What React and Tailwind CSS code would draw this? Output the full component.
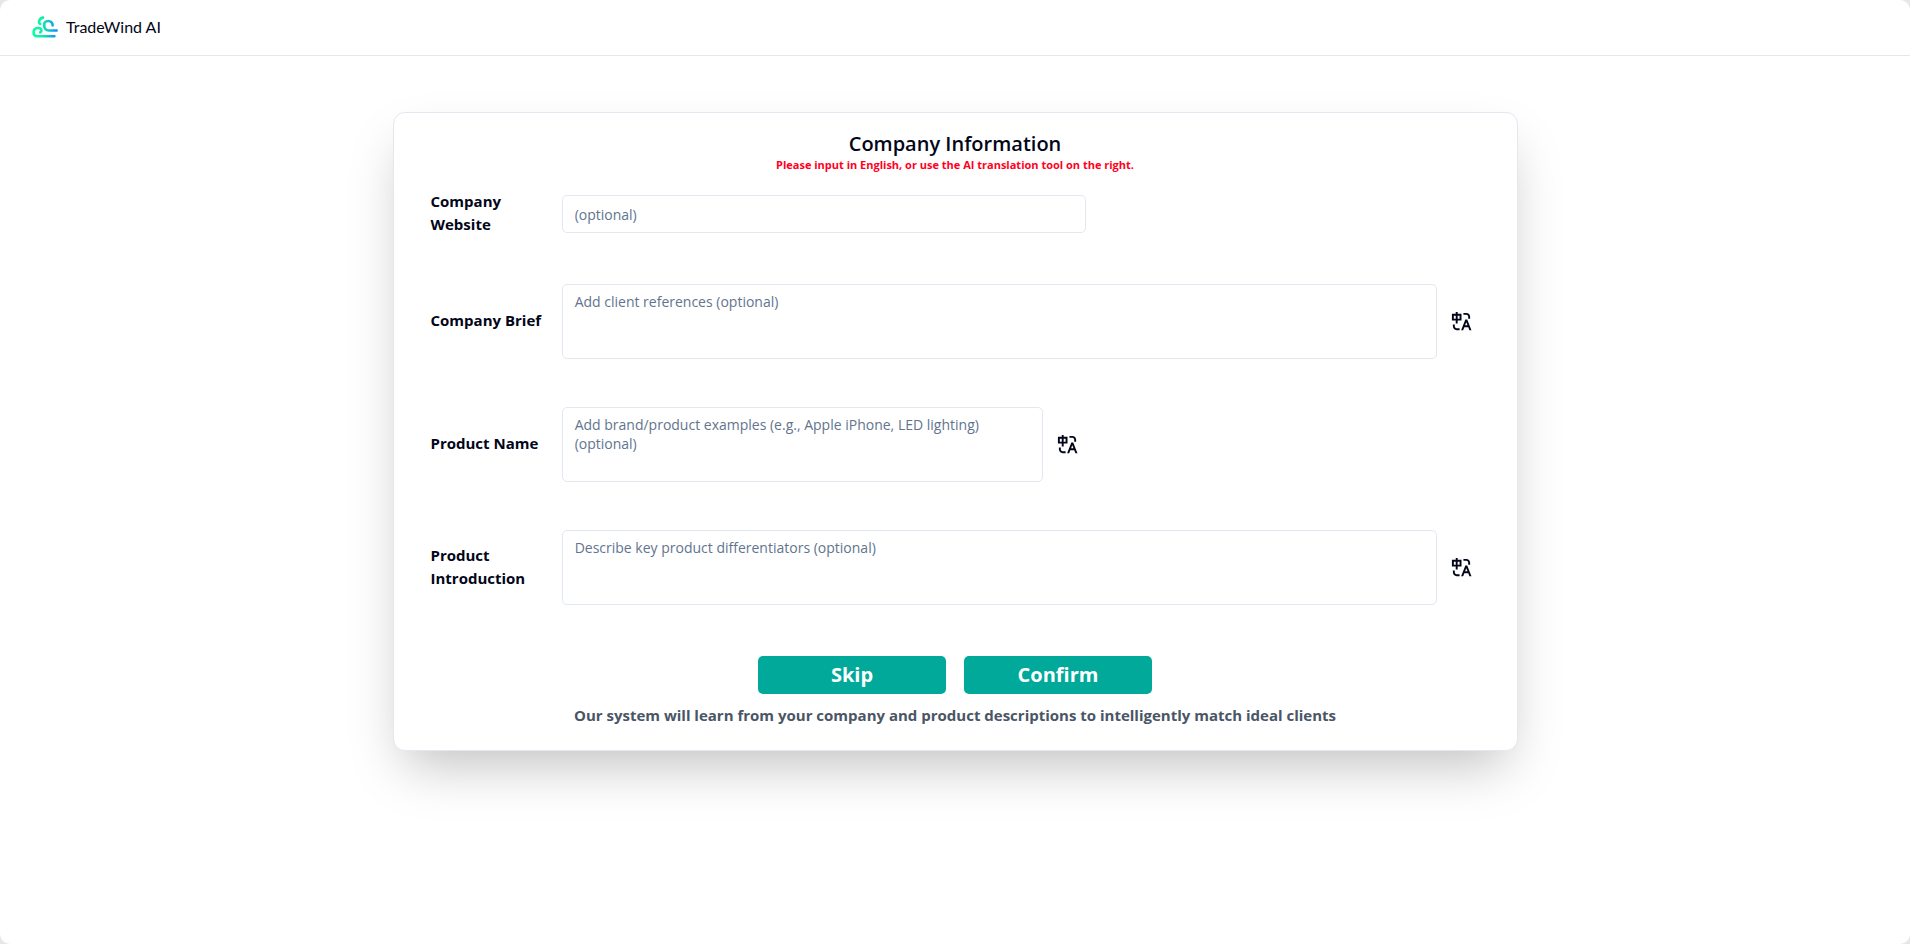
function Logo() {
  return (
    <svg viewBox="0 0 26 22" className="h-[22px] w-[26px]" fill="none" strokeWidth="2.6" strokeLinecap="round" aria-hidden="true">
      <defs>
        <linearGradient id="wind" x1="0" y1="0" x2="26" y2="0" gradientUnits="userSpaceOnUse">
          <stop offset="0" stopColor="#0cffa0" />
          <stop offset="0.35" stopColor="#0ff0a8" />
          <stop offset="0.65" stopColor="#12c4d0" />
          <stop offset="1" stopColor="#1482ff" />
        </linearGradient>
      </defs>
      <g stroke="url(#wind)">
        <path d="M8.2 8C7 7.2 6.8 6.2 7.2 4.8C7.8 3 9.2 1.9 11 1.6" />
        <path d="M12.2 9.2C11.8 6.8 13.6 5 16.2 5C18.8 5 20.8 6.8 20.6 9.4" />
        <path d="M12.2 9.2C12 12.6 14 14.5 16.8 14.5H24.6" />
        <path d="M8.2 16.4C9.2 15.8 9.6 15.2 9.4 14.2C9 12.6 7.6 11.8 5.8 12C3 12.2 1.6 14 1.6 16.4C1.6 18.8 2.8 20.2 5.2 20.2H22.4" />
      </g>
    </svg>
  );
}

function TranslateIcon() {
  return (
    <svg viewBox="0 0 24 24" className="size-[23px]" fill="currentColor" aria-hidden="true">
      <path d="M5 15V17C5 18.0544 5.81588 18.9182 6.85074 18.9945L7 19H10V21H7C4.79086 21 3 19.2091 3 17V15H5ZM18 10L22.4 21H20.245L19.044 18H14.954L13.755 21H11.601L16 10H18ZM17 12.8852L15.753 16H18.245L17 12.8852ZM8 2V4H12V11H8V14H6V11H2V4H6V2H8ZM17 3C19.2091 3 21 4.79086 21 7V9H19V7C19 5.89543 18.1046 5 17 5H14V3H17ZM6 6H4V9H6V6ZM10 6H8V9H10V6Z" />
    </svg>
  );
}

function TranslateButton({ label }) {
  return (
    <button type="button" aria-label={label} className="flex w-[43px] shrink-0 items-center justify-center pl-1.5">
      <TranslateIcon />
    </button>
  );
}

function Field({ id, label, children }) {
  return (
    <div className="grid grid-cols-8 items-center">
      <label htmlFor={id} className="pr-4 pb-0.5 font-bold leading-[23px]">
        {label}
      </label>
      {children}
    </div>
  );
}

const box =
  "min-w-0 flex-1 rounded-[5px] border border-slate-200 bg-white px-3 text-[14px] text-slate-900 placeholder:text-slate-500";

function AreaField({ id, label, placeholder, half }) {
  return (
    <Field id={id} label={label}>
      <div className={half ? "col-span-4 flex items-center" : "col-span-7 flex items-center"}>
        <textarea id={id} placeholder={placeholder} className={box + " block h-[75px] resize-none py-[7px] leading-[19px]"} />
        <TranslateButton label={"Translate " + label} />
      </div>
    </Field>
  );
}

export default function App() {
  return (
    <div className="min-h-screen bg-gray-200">
      <div className="flex min-h-screen flex-col rounded-[10px] bg-white font-['Open_Sans','Noto_Sans',sans-serif] text-[15px] leading-[22px] text-slate-950">
        <header className="flex h-14 items-center gap-2 border-b border-slate-200 px-8 pb-0.5">
          <Logo />
          <span className="font-['Lato',sans-serif] text-[16px]">TradeWind AI</span>
        </header>
        <main className="flex justify-center px-4 pt-14 pb-16">
          <form
            className="w-full max-w-[1125px] rounded-xl border border-slate-200 bg-white px-[37px] pt-5 pb-6 shadow-2xl"
            onSubmit={(e) => e.preventDefault()}
          >
            <h1 className="text-center text-[20px] font-semibold leading-[22px]">Company Information</h1>
            <p className="text-center text-[11px] font-bold leading-[20px] text-[#ff0022]">
              Please input in English, or use the AI translation tool on the right.
            </p>
            <div className="mt-[15px] flex flex-col gap-[46px]">
              <Field id="website" label="Company Website">
                <div className="col-span-4 flex">
                  <input id="website" type="text" placeholder="(optional)" className={box + " h-[38px]"} />
                </div>
              </Field>
              <div className="flex flex-col gap-12">
                <AreaField id="brief" label="Company Brief" placeholder="Add client references (optional)" />
                <AreaField
                  id="name"
                  label="Product Name"
                  placeholder="Add brand/product examples (e.g., Apple iPhone, LED lighting) (optional)"
                  half
                />
                <AreaField id="intro" label="Product Introduction" placeholder="Describe key product differentiators (optional)" />
              </div>
            </div>
            <div className="mt-[51px] flex justify-center gap-[18px]">
              <button type="button" className="h-[38px] w-[188px] rounded-[5px] bg-[#00a99a] text-[20px] font-bold text-white">
                Skip
              </button>
              <button type="submit" className="h-[38px] w-[188px] rounded-[5px] bg-[#00a99a] text-[20px] font-bold text-white">
                Confirm
              </button>
            </div>
            <p className="mt-2.5 text-center font-bold text-gray-600">
              Our system will learn from your company and product descriptions to intelligently match ideal clients
            </p>
          </form>
        </main>
      </div>
    </div>
  );
}
